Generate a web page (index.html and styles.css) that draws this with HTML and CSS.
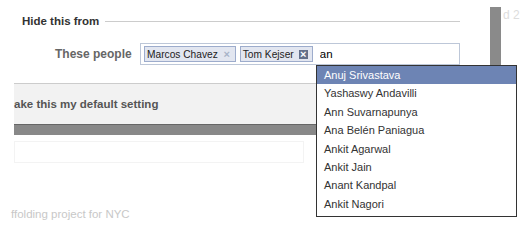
FILE: index.html
```html
<!DOCTYPE html>
<html lang="en">
<head>
<meta charset="UTF-8">
<title>Privacy - Hide this from</title>
<link rel="stylesheet" href="styles.css">
</head>
<body>

<div class="dialog">
    <div class="side-bar"></div>
    <span class="side-text">d 2</span>

    <div class="section-head">
        <span class="section-title">Hide this from</span>
        <span class="section-line"></span>
    </div>

    <div class="people-row">
        <label class="people-label" for="peopleInput">These people</label>
        <div class="token-box">
            <span class="token">Marcos Chavez<span class="token-x">&#215;</span></span>
            <span class="token">Tom Kejser<span class="token-x token-x-hover">&#215;</span></span>
            <input type="text" id="peopleInput" class="token-input" value="an">
        </div>
    </div>

    <div class="default-band">
        <span class="default-text">ake this my default setting</span>
    </div>
    <div class="dark-bar"></div>
    <div class="faint-box"></div>
    <p class="faint-text">ffolding project for NYC</p>

    <ul class="suggest">
        <li class="selected">Anuj Srivastava</li>
        <li>Yashaswy Andavilli</li>
        <li>Ann Suvarnapunya</li>
        <li>Ana Belén Paniagua</li>
        <li>Ankit Agarwal</li>
        <li>Ankit Jain</li>
        <li>Anant Kandpal</li>
        <li>Ankit Nagori</li>
    </ul>
</div>

</body>
</html>
```

FILE: styles.css
```css
body {
    font-family: "Liberation Sans", Arial, sans-serif;
    font-size: 11px;
    color: #333;
    margin: 0;
    padding: 0;
    background-color: #fff;
}
.dialog {
    position: relative;
    width: 529px;
    height: 250px;
    overflow: hidden;
}
.side-bar {
    position: absolute;
    left: 490px;
    top: 7px;
    width: 11px;
    height: 70px;
    background-color: #8a8a8a;
}
.side-text {
    position: absolute;
    left: 503px;
    top: 8px;
    font-size: 12px;
    color: #ddd;
}
.section-head {
    display: flex;
    align-items: center;
    gap: 6px;
    width: 438px;
    margin-left: 22px;
    padding-top: 13px;
    height: 16px;
}
.section-title {
    font-weight: bold;
    font-size: 11.5px;
    color: #333;
}
.section-line {
    flex: 1;
    border-top: 1px solid #ccc;
}
.people-row {
    display: flex;
    align-items: center;
    margin-top: 14px;
    margin-left: 55px;
    height: 22px;
}
.people-label {
    width: 85px;
    font-weight: bold;
    font-size: 12px;
    color: #666;
}
.token-box {
    display: flex;
    align-items: center;
    gap: 4px;
    width: 312px;
    height: 20px;
    padding: 0 3px;
    border: 1px solid #bdc7d8;
}
.token {
    display: flex;
    align-items: center;
    gap: 5px;
    height: 14px;
    padding: 0 4px 0 2px;
    border: 1px solid #9daccc;
    background-color: #e2e6f0;
    color: #222;
    font-size: 10.2px;
    white-space: nowrap;
}
.token-x {
    display: inline-block;
    width: 8px;
    height: 9px;
    line-height: 9px;
    text-align: center;
    font-size: 11px;
    font-weight: bold;
    color: #a8b3c8;
}
.token-x-hover {
    width: 9px;
    background-color: #64708a;
    color: #fff;
}
.token-input {
    width: 100px;
    border: none;
    outline: none;
    padding: 0 0 0 3px;
    font-family: "Liberation Sans", Arial, sans-serif;
    font-size: 11.5px;
    color: #000;
}
.default-band {
    width: 476px;
    height: 40px;
    margin-top: 18px;
    margin-left: 14px;
    border-top: 1px solid #ccc;
    background-color: #f2f2f2;
    display: flex;
    align-items: center;
}
.default-text {
    font-weight: bold;
    font-size: 11.5px;
    color: #555;
}
.dark-bar {
    width: 476px;
    height: 10px;
    margin-left: 14px;
    border-top: 1px solid #666;
    background-color: #888;
}
.faint-box {
    width: 288px;
    height: 20px;
    margin: 6px 0 0 14px;
    border: 1px solid #f3f3f3;
}
.faint-text {
    margin: 45px 0 0 11px;
    font-size: 11.5px;
    color: #c8c8c8;
}
.suggest {
    position: absolute;
    left: 316px;
    top: 65px;
    width: 199px;
    margin: 0;
    padding: 0 0 3px 0;
    list-style: none;
    border: 1px solid #333;
    background-color: #fff;
}
.suggest li {
    height: 18.4px;
    line-height: 18px;
    padding-left: 7px;
    font-size: 11px;
    color: #333;
}
.suggest li.selected {
    background-color: #6d84b4;
    color: #fff;
}
```
